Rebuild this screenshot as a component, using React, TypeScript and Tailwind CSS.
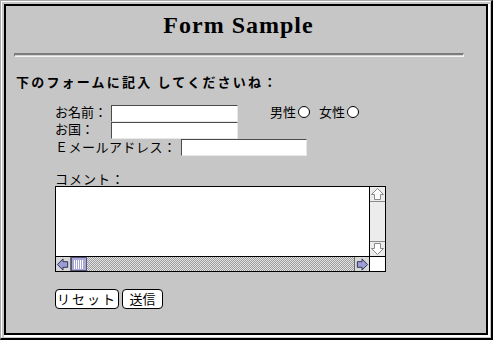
import React from 'react';

const jp = "font-['Noto_Sans_CJK_JP','Noto_Sans',sans-serif]";

function TextField({ width = 'w-[127px]' }: { width?: string }) {
  return (
    <input
      type="text"
      className={`${width} h-[17px] bg-white border-t border-l border-[#4a4a4a] border-r-[#e8e8e8] border-b-[#e8e8e8] border-r border-b outline-none`}
    />
  );
}

function Radio() {
  return <span className="block w-[12px] h-[12px] rounded-full bg-white border border-black" />;
}

function ArrowUp() {
  return (
    <svg width="15" height="14" viewBox="0 0 15 14">
      <polygon points="7.5,1.5 13.5,7.5 10.5,7.5 10.5,12.5 4.5,12.5 4.5,7.5 1.5,7.5" fill="#fff" stroke="#8a8a8a" />
    </svg>
  );
}

function ArrowDown() {
  return (
    <svg width="15" height="14" viewBox="0 0 15 14">
      <polygon points="7.5,12.5 13.5,6.5 10.5,6.5 10.5,1.5 4.5,1.5 4.5,6.5 1.5,6.5" fill="#fff" stroke="#8a8a8a" />
    </svg>
  );
}

function ArrowSide({ dir }: { dir: 'left' | 'right' }) {
  const pts =
    dir === 'left'
      ? '1.5,7.5 7.5,1.5 7.5,4.5 12.5,4.5 12.5,10.5 7.5,10.5 7.5,13.5'
      : '13.5,7.5 7.5,1.5 7.5,4.5 2.5,4.5 2.5,10.5 7.5,10.5 7.5,13.5';
  return (
    <svg width="15" height="15" viewBox="0 0 15 15">
      <polygon points={pts} fill="#9c9cd6" stroke="#2a2a4a" />
    </svg>
  );
}

function ScrollTextArea() {
  return (
    <div className="w-[331px] h-[86px] border border-black bg-white flex flex-col">
      <div className="flex flex-1">
        <div className="flex-1 bg-white" />
        <div className="w-[16px] border-l border-black bg-[#ececec] flex flex-col justify-between">
          <div className="h-[15px] border-b border-[#8a8a8a] flex items-center justify-center">
            <ArrowUp />
          </div>
          <div className="h-[15px] border-t border-[#8a8a8a] flex items-center justify-center">
            <ArrowDown />
          </div>
        </div>
      </div>
      <div className="h-[15px] border-t border-black flex">
        <div className="w-[15px] border-r border-[#6a6a6a] bg-[#d8d8d8] flex items-center justify-center">
          <ArrowSide dir="left" />
        </div>
        <div className="w-[16px] bg-[#a9a9d6] border border-[#55557a] flex items-center justify-center">
          <svg width="10" height="9" viewBox="0 0 10 9">
            {[1, 3, 5, 7, 9].map((x) => (
              <line key={x} x1={x - 0.5} y1="0" x2={x - 0.5} y2="9" stroke="#fff" />
            ))}
          </svg>
        </div>
        <div className="flex-1 bg-[repeating-conic-gradient(#9c9c9c_0%_25%,#e4e4e4_0%_50%)] bg-[length:2px_2px]" />
        <div className="w-[15px] border-l border-[#6a6a6a] bg-[#d8d8d8] flex items-center justify-center">
          <ArrowSide dir="right" />
        </div>
        <div className="w-[16px] border-l border-black bg-white" />
      </div>
    </div>
  );
}

export default function App() {
  return (
    <div className="w-[493px] h-[340px] bg-[#c6c6c6] border-l border-t border-[#a8a8a8] border-r-2 border-b-2 border-r-black border-b-black">
      <div className="h-full border-l border-t border-white border-r border-b border-r-[#c6c6c6] border-b-[#c6c6c6] pl-[2px] pt-[2px]">
        <div className="h-full border-r-2 border-b-2 border-white">
          <div className="h-full border-2 border-black flex flex-col text-black">
            <div className="mt-[5px] h-[28px] leading-[28px] text-center pr-[15px] font-['Liberation_Serif',serif] font-bold text-[24px] tracking-[1px]">
              Form Sample
            </div>

            <div className="mt-[14px] ml-[8px] w-[450px] h-[4px] border-t-2 border-l border-[#7c7c7c] border-r border-b border-r-[#f4f4f4] border-b-[#f4f4f4] bg-[#d4d4d4]" />

            <div className={`mt-[17px] ml-[10px] h-[16px] leading-[16px] text-[13px] font-bold tracking-[2.2px] ${jp}`}>
              下のフォームに記入 してくださいね：
            </div>

            <div className={`mt-[14px] ml-[49px] text-[13px] leading-[14px] ${jp}`}>
              <div className="flex items-center h-[18px]">
                <span className="w-[56px] mb-[3px]">お名前：</span>
                <TextField />
                <span className="ml-[32px] mb-[3px]">男性</span>
                <span className="ml-[2px] mb-[3px] flex items-center"><Radio /></span>
                <span className="ml-[9px] mb-[3px]">女性</span>
                <span className="ml-[2px] mb-[3px] flex items-center"><Radio /></span>
              </div>
              <div className="flex items-center h-[17px]">
                <span className="w-[56px] mb-[3px]">お国：</span>
                <TextField />
              </div>
              <div className="flex items-center h-[17px]">
                <span className="w-[126px] mb-[2px] tracking-[0.5px] whitespace-nowrap">Ｅメールアドレス：</span>
                <TextField width="w-[126px]" />
              </div>

              <div className="mt-[15px] h-[15px] leading-[15px] tracking-[1px]">コメント：</div>
              <ScrollTextArea />

              <div className="mt-[17px] flex gap-[3px]">
                <button className="w-[64px] h-[20px] bg-white border border-black rounded-[4px] text-[13px] leading-[18px] tracking-[2px] whitespace-nowrap">
                  リセット
                </button>
                <button className="w-[41px] h-[20px] bg-white border border-black rounded-[4px] text-[13px] leading-[18px] whitespace-nowrap">
                  送信
                </button>
              </div>
            </div>
          </div>
        </div>
      </div>
    </div>
  );
}
